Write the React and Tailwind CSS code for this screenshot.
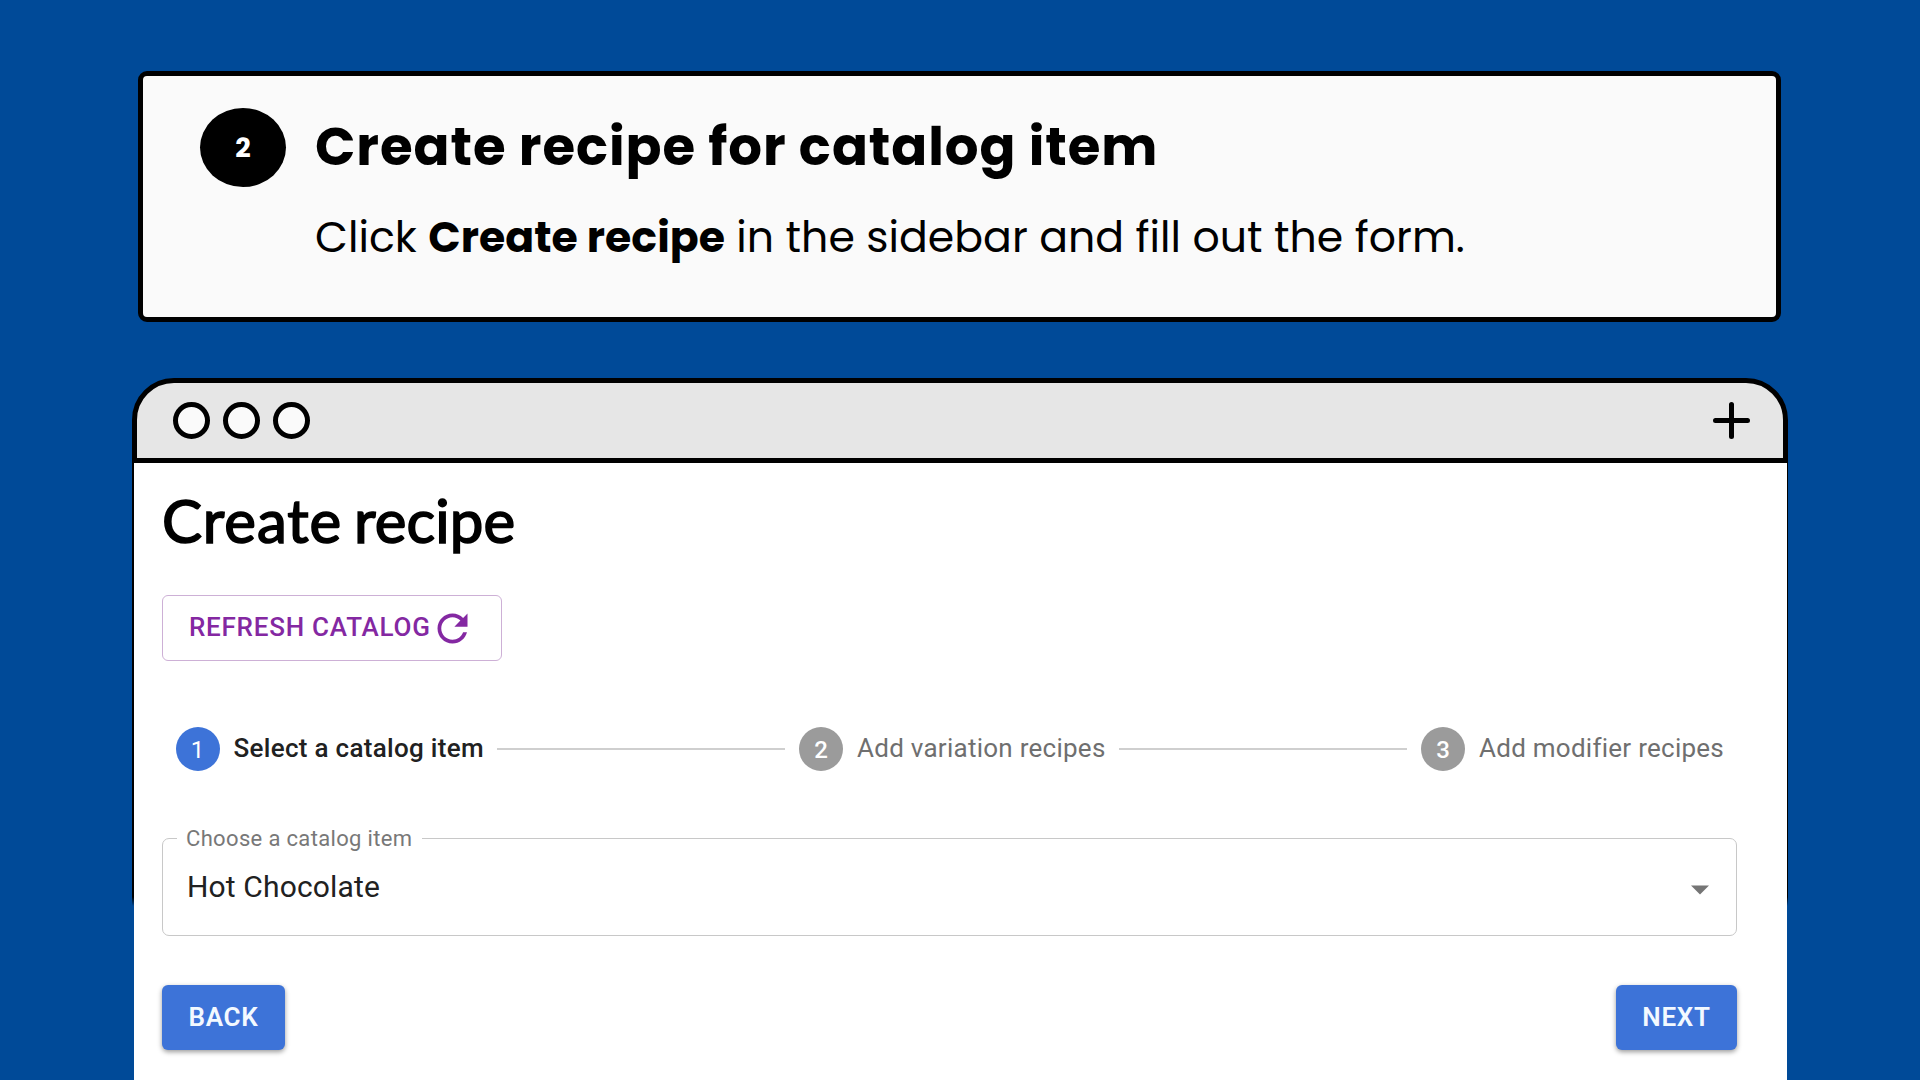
import React from "react";

function Step({ number, label, active, width }) {
  return (
    <div className="flex items-center">
      <div
        className={
          active
            ? "flex h-[44px] w-[44px] items-center justify-center rounded-full bg-[#3d73d8] pt-[1px] text-[24px] leading-none text-white"
            : "flex h-[44px] w-[44px] items-center justify-center rounded-full bg-[#9b9b9b] pt-[1px] text-[24px] leading-none font-medium text-white"
        }
      >
        {number}
      </div>
      <span
        style={{ width }}
        className={
          active
            ? "-mt-[3px] ml-[14px] text-[26px] leading-[32px] font-medium tracking-[0.3px] whitespace-nowrap text-[#212121]"
            : "-mt-[3px] ml-[14px] text-[26px] leading-[32px] tracking-[0.26px] whitespace-nowrap text-[#6f6f6f]"
        }
      >
        {label}
      </span>
    </div>
  );
}

function Connector() {
  return <div className="mx-[14px] h-[2px] flex-1 bg-[#cfcfcf]" />;
}

function InstructionCard() {
  return (
    <section className="ml-[138px] flex h-[251px] w-[1643px] flex-col rounded-[9px] border-[5px] border-black bg-[#fafafa] pt-[32px] pl-[57px] font-[Poppins,Inter,sans-serif] text-black">
      <div className="flex h-[79px] items-start">
        <div className="flex h-[79px] w-[86px] items-center justify-center rounded-[50%] bg-black text-[27px] leading-none font-bold text-white">
          2
        </div>
        <h1 className="-mt-[1px] ml-[29px] text-[53px] leading-[80px] font-bold tracking-[0.95px] whitespace-nowrap">
          Create recipe for catalog item
        </h1>
      </div>
      <p className="mt-[20px] ml-[115px] text-[42.6px] leading-[60px] tracking-[0.03px] whitespace-nowrap">
        Click <span className="font-bold">Create recipe</span> in the sidebar and fill out the form.
      </p>
    </section>
  );
}

function TitleBar() {
  return (
    <div className="flex h-[85px] items-center justify-between rounded-t-[42px] border-[5px] border-black bg-[#e6e6e6] pr-[33px] pl-[36px]">
      <div className="flex gap-[13px]">
        <div className="h-[37px] w-[37px] rounded-full border-[5px] border-black bg-[#fafafa]" />
        <div className="h-[37px] w-[37px] rounded-full border-[5px] border-black bg-[#fafafa]" />
        <div className="h-[37px] w-[37px] rounded-full border-[5px] border-black bg-[#fafafa]" />
      </div>
      <svg className="h-[37px] w-[37px]" viewBox="0 0 37 37" stroke="#000" strokeWidth="5" strokeLinecap="round">
        <path d="M18.500 2.500v32M2.500 18.500h32" />
      </svg>
    </div>
  );
}

export default function App() {
  return (
    <main className="h-[1080px] w-[1920px] overflow-hidden bg-[#004a98] pt-[71px]">
      <InstructionCard />
      <div className="mt-[56px] ml-[132px] w-[1656px]">
        <TitleBar />
        <div className="bg-[linear-gradient(to_bottom,#000_434px,transparent_443px)] pr-[1.5px] pl-[2px]">
          <div className="h-[617px] bg-white pt-[21px] pr-[49.5px] pl-[28px] font-[Roboto,sans-serif]">
            <h2 className="flex gap-[12px] font-[Lato,sans-serif] text-[60px] leading-[72px] text-black [-webkit-text-stroke:1.6px_#000]">
              <span className="tracking-[0.9px]">Create</span>
              <span className="tracking-[0.1px]">recipe</span>
            </h2>
            <button className="mt-[39px] flex h-[66px] w-[340px] items-center rounded-[6px] border border-[#cdb0d6] pl-[26px] text-[#8428a2]">
              <span className="-mt-[3px] w-[241px] text-left text-[26px] leading-[32px] font-medium tracking-[0.75px] whitespace-nowrap">
                REFRESH CATALOG
              </span>
              <svg className="h-[45px] w-[45px] shrink-0" viewBox="0 0 24 24" fill="currentColor">
                <path d="M17.65 6.35C16.2 4.9 14.21 4 12 4c-4.42 0-7.99 3.58-7.99 8s3.57 8 7.99 8c3.73 0 6.84-2.55 7.73-6h-2.08c-.82 2.33-3.04 4-5.65 4-3.31 0-6-2.69-6-6s2.69-6 6-6c1.66 0 3.14.69 4.22 1.78L13 11h7V4l-2.35 2.35z" />
              </svg>
            </button>
            <div className="mt-[66px] flex h-[44px] items-center pr-[13px] pl-[13.5px]">
              <Step number="1" label="Select a catalog item" active width={249.5} />
              <Connector />
              <Step number="2" label="Add variation recipes" width={248} />
              <Connector />
              <Step number="3" label="Add modifier recipes" width={245} />
            </div>
            <div className="relative mt-[67px] flex h-[98px] items-center justify-between rounded-[7px] border border-[#c8c8c8] pr-[27px] pl-[24px]">
              <span className="absolute -top-[14px] left-[14px] w-[245px] bg-white pl-[9px] text-[22px] leading-[28px] tracking-[0.34px] whitespace-nowrap text-[#787878]">
                Choose a catalog item
              </span>
              <span className="text-[30px] leading-[40px] tracking-[0.15px] text-[#212121]">Hot Chocolate</span>
              <svg className="mt-[6px] h-[10px] w-[18px]" viewBox="0 0 18 10" fill="#757575">
                <path d="M0 .5h18l-9 9z" />
              </svg>
            </div>
            <div className="mt-[49px] flex justify-between text-[26px] leading-none font-semibold tracking-[0.7px] text-[#f3f9ff]">
              <button className="h-[65px] w-[123px] rounded-[6px] bg-[#3d73d8] pb-[1px] shadow-[0_2px_5px_rgba(0,0,0,0.4)]">
                BACK
              </button>
              <button className="h-[65px] w-[121px] rounded-[6px] bg-[#3d73d8] pb-[1px] shadow-[0_2px_5px_rgba(0,0,0,0.4)]">
                NEXT
              </button>
            </div>
          </div>
        </div>
      </div>
    </main>
  );
}
